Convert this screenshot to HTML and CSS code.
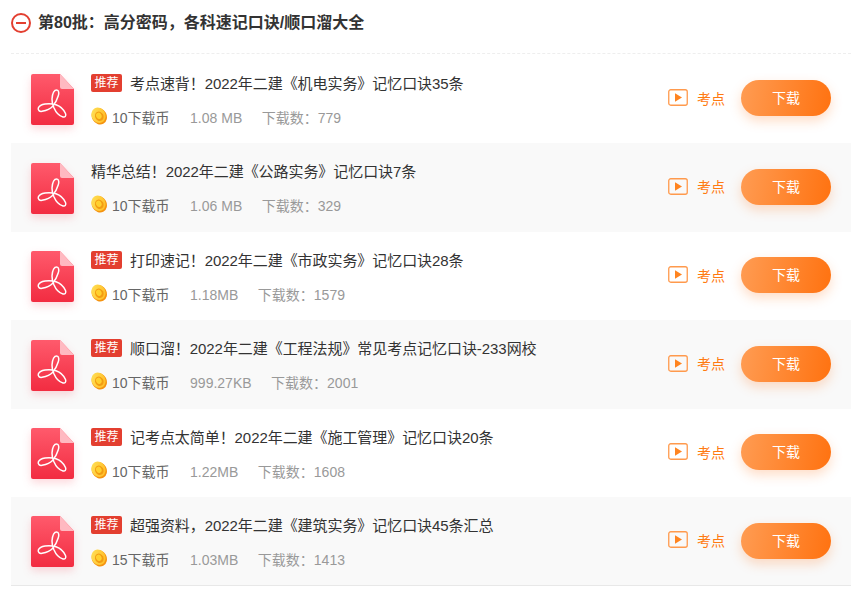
FILE: index.html
```html
<!DOCTYPE html>
<html lang="zh-CN">
<head>
    <meta charset="utf-8">
    <title>第80批</title>
    <link rel="stylesheet" href="styles.css">
</head>
<body>
    <svg class="defs" width="0" height="0">
        <defs>
            <linearGradient id="pdfBody" x1="0" y1="0" x2="0" y2="1">
                <stop offset="0" stop-color="#ff5a6c"/>
                <stop offset="1" stop-color="#f22c41"/>
            </linearGradient>
            <linearGradient id="coinFill" x1="0" y1="0" x2="1" y2="1">
                <stop offset="0" stop-color="#ffe45c"/>
                <stop offset="1" stop-color="#ffb81f"/>
            </linearGradient>
            <symbol id="pdf" viewBox="0 0 43 51">
                <path d="M2 0H29L43 15V49a2 2 0 0 1-2 2H2a2 2 0 0 1-2-2V2a2 2 0 0 1 2-2z" fill="url(#pdfBody)"/>
                <path d="M29 0L43 15H31a2 2 0 0 1-2-2z" fill="#ffb9c1"/>
                <path d="M7.300 34C8.500 31.500 11 30.500 14 30C18 29.300 21 29.500 25 30.700C29 32 33 36 34.500 39.500C35.500 42 34 43.500 32 43C28 42 24.500 37.500 22.800 33.500C21.500 30 20.800 28 21 25C21.300 21 22.500 16 25.700 16C28 16 28.200 19.500 27.200 22C26 26 23.800 30 21.500 32.500C19 35.300 15 36.500 11 37.300C8.500 37.800 6.800 36 7.300 34z" fill="none" stroke="#fff" stroke-width="1.500" stroke-linejoin="round"/>
            </symbol>
            <symbol id="coin" viewBox="0 0 16 18">
                <ellipse cx="8.300" cy="9.300" rx="7.400" ry="8.500" transform="rotate(-28 8.300 9.300)" fill="#f5930f"/>
                <ellipse cx="7.500" cy="8.300" rx="6.900" ry="7.900" transform="rotate(-28 7.500 8.300)" fill="url(#coinFill)"/>
                <ellipse cx="8.300" cy="9.300" rx="4.200" ry="4.800" transform="rotate(-28 8.300 9.300)" fill="#f39c12"/>
                <ellipse cx="7.800" cy="8.800" rx="2.700" ry="3.200" transform="rotate(-28 7.800 8.800)" fill="#ffd02e"/>
            </symbol>
            <symbol id="play" viewBox="0 0 20 17">
                <rect x="0.750" y="0.750" width="18.500" height="15.500" rx="2" fill="none" stroke="#ff9a4d" stroke-width="1.300"/>
                <path d="M7 4.200L14 8.500L7 12.800z" fill="#ff8420"/>
            </symbol>
        </defs>
    </svg>

    <header class="batch-head">
        <span class="toggle"></span>
        <h2>第80批：高分密码，各科速记口诀/顺口溜大全</h2>
    </header>

    <ul class="doc-list">
        <li class="doc">
            <svg class="pdf-icon"><use href="#pdf"/></svg>
            <div class="doc-info">
                <div class="doc-title"><span class="tag">推荐</span>考点速背！2022年二建《机电实务》记忆口诀35条</div>
                <div class="doc-meta">
                    <svg class="coin"><use href="#coin"/></svg>
                    <span class="price">10下载币</span>
                    <span class="size">1.08 MB</span>
                    <span class="count">下载数：779</span>
                </div>
            </div>
            <a class="point"><svg class="play"><use href="#play"/></svg>考点</a>
            <a class="download">下载</a>
        </li>
        <li class="doc">
            <svg class="pdf-icon"><use href="#pdf"/></svg>
            <div class="doc-info">
                <div class="doc-title">精华总结！2022年二建《公路实务》记忆口诀7条</div>
                <div class="doc-meta">
                    <svg class="coin"><use href="#coin"/></svg>
                    <span class="price">10下载币</span>
                    <span class="size">1.06 MB</span>
                    <span class="count">下载数：329</span>
                </div>
            </div>
            <a class="point"><svg class="play"><use href="#play"/></svg>考点</a>
            <a class="download">下载</a>
        </li>
        <li class="doc">
            <svg class="pdf-icon"><use href="#pdf"/></svg>
            <div class="doc-info">
                <div class="doc-title"><span class="tag">推荐</span>打印速记！2022年二建《市政实务》记忆口诀28条</div>
                <div class="doc-meta">
                    <svg class="coin"><use href="#coin"/></svg>
                    <span class="price">10下载币</span>
                    <span class="size">1.18MB</span>
                    <span class="count">下载数：1579</span>
                </div>
            </div>
            <a class="point"><svg class="play"><use href="#play"/></svg>考点</a>
            <a class="download">下载</a>
        </li>
        <li class="doc">
            <svg class="pdf-icon"><use href="#pdf"/></svg>
            <div class="doc-info">
                <div class="doc-title"><span class="tag">推荐</span>顺口溜！2022年二建《工程法规》常见考点记忆口诀-233网校</div>
                <div class="doc-meta">
                    <svg class="coin"><use href="#coin"/></svg>
                    <span class="price">10下载币</span>
                    <span class="size">999.27KB</span>
                    <span class="count">下载数：2001</span>
                </div>
            </div>
            <a class="point"><svg class="play"><use href="#play"/></svg>考点</a>
            <a class="download">下载</a>
        </li>
        <li class="doc">
            <svg class="pdf-icon"><use href="#pdf"/></svg>
            <div class="doc-info">
                <div class="doc-title"><span class="tag">推荐</span>记考点太简单！2022年二建《施工管理》记忆口诀20条</div>
                <div class="doc-meta">
                    <svg class="coin"><use href="#coin"/></svg>
                    <span class="price">10下载币</span>
                    <span class="size">1.22MB</span>
                    <span class="count">下载数：1608</span>
                </div>
            </div>
            <a class="point"><svg class="play"><use href="#play"/></svg>考点</a>
            <a class="download">下载</a>
        </li>
        <li class="doc">
            <svg class="pdf-icon"><use href="#pdf"/></svg>
            <div class="doc-info">
                <div class="doc-title"><span class="tag">推荐</span>超强资料，2022年二建《建筑实务》记忆口诀45条汇总</div>
                <div class="doc-meta">
                    <svg class="coin"><use href="#coin"/></svg>
                    <span class="price">15下载币</span>
                    <span class="size">1.03MB</span>
                    <span class="count">下载数：1413</span>
                </div>
            </div>
            <a class="point"><svg class="play"><use href="#play"/></svg>考点</a>
            <a class="download">下载</a>
        </li>
    </ul>
</body>
</html>
```

FILE: styles.css
```css
html, body { margin: 0; padding: 0; }
body { background: #fff; font-family: "Liberation Sans", "Noto Sans CJK SC", sans-serif; color: #333; width: 855px; height: 589px; overflow: hidden; }
.defs { position: absolute; }

.batch-head { display: flex; align-items: center; height: 53px; margin: 0 4px 0 11px; border-bottom: 1px dashed #eee; }
.batch-head h2 { margin: -7px 0 0 7px; font-size: 16px; line-height: 22px; font-weight: bold; color: #333; }
.toggle { position: relative; width: 20px; height: 20px; margin-top: -7px; border: 2px solid #e33f30; border-radius: 50%; box-sizing: border-box; }
.toggle::after { content: ""; position: absolute; left: 3px; right: 3px; top: 7px; height: 2px; background: #e33f30; }

.doc-list { list-style: none; margin: 0 4px 0 11px; padding: 0.5px 0 0; }
.doc { display: flex; align-items: center; height: 88.5px; padding: 0 20px; box-sizing: border-box; }
.doc:nth-child(even) { background: #f9f9f9; }
.doc:last-child { border-bottom: 1px solid #e8e8e8; }
.doc:last-child .download { margin-bottom: 0; }

.pdf-icon { width: 43px; height: 51px; flex: none; margin-top: 1.5px; filter: drop-shadow(0 4px 4px rgba(242, 44, 65, .18)); }
.doc-info { flex: 1; min-width: 0; margin: 4px 0 0 17px; }
.doc-title { display: flex; align-items: center; height: 20px; font-size: 15px; line-height: 20px; letter-spacing: -0.06px; color: #333; }
.tag { flex: none; width: 31px; height: 18px; margin: 0 8px 2px 0; border-radius: 2px; background: #e33f30; color: #fff; font-size: 12px; line-height: 18px; letter-spacing: 0; text-align: center; }
.doc-meta { display: flex; align-items: center; height: 20px; margin-top: 14px; font-size: 14px; line-height: 20px; color: #999; }
.coin { width: 16px; height: 18px; margin: -4px 5px 0 0; flex: none; }
.price { color: #666; margin-right: 20.5px; }
.size { margin-right: 19.5px; }

.point { display: flex; align-items: center; flex: none; width: 73px; margin: 0 0 2px 8px; color: #ff7a10; font-size: 14px; }
.play { width: 20px; height: 17px; margin-right: 9px; flex: none; }
.download { flex: none; width: 90px; height: 36px; margin-bottom: 1px; border-radius: 18px; background: linear-gradient(100deg, #ff9c53, #ff7210); box-shadow: 0 5px 12px rgba(255, 120, 30, .25); color: #fff; font-size: 14px; line-height: 36px; text-align: center; }
```
